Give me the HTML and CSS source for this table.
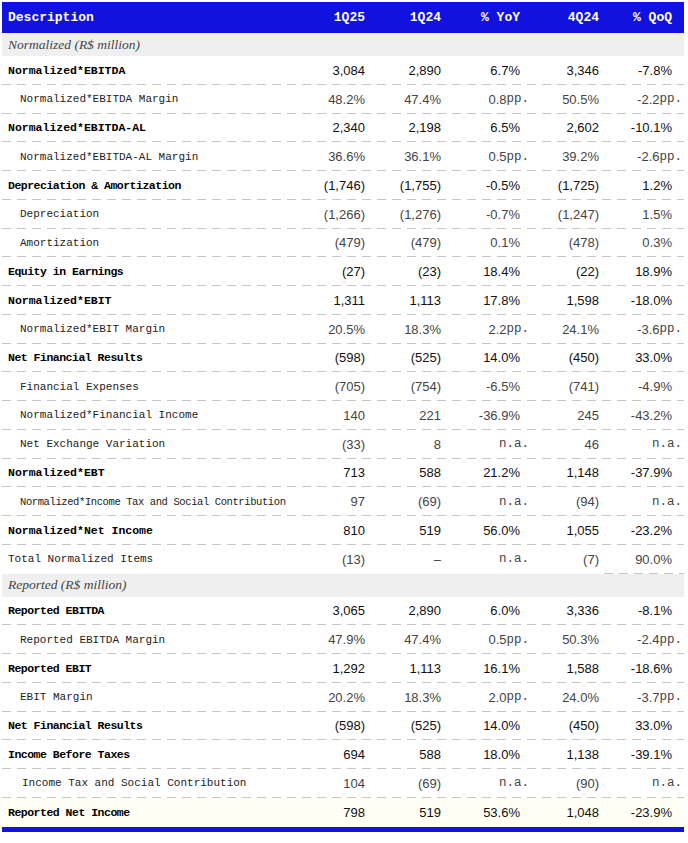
FILE: index.html
```html
<!DOCTYPE html>
<html lang="en">
<head>
<meta charset="utf-8">
<title>Results</title>
<link rel="stylesheet" href="styles.css">
</head>
<body>
<div class="table">
  <div class="row head">
    <div class="lbl">Description</div><div class="c">1Q25</div><div class="c">1Q24</div><div class="c">% YoY</div><div class="c">4Q24</div><div class="c">% QoQ</div>
  </div>
  <div class="row section"><div class="lbl">Normalized (R$ million)</div></div>

  <div class="row b dash"><div class="lbl">Normalized*EBITDA</div><div class="c">3,084</div><div class="c">2,890</div><div class="c">6.7%</div><div class="c">3,346</div><div class="c">-7.8%</div></div>
  <div class="row i dash"><div class="lbl">Normalized*EBITDA Margin</div><div class="c">48.2%</div><div class="c">47.4%</div><div class="c">0.8<span class="pp">pp.</span></div><div class="c">50.5%</div><div class="c">-2.2<span class="pp">pp.</span></div></div>
  <div class="row b dash"><div class="lbl">Normalized*EBITDA-AL</div><div class="c">2,340</div><div class="c">2,198</div><div class="c">6.5%</div><div class="c">2,602</div><div class="c">-10.1%</div></div>
  <div class="row i dash"><div class="lbl">Normalized*EBITDA-AL Margin</div><div class="c">36.6%</div><div class="c">36.1%</div><div class="c">0.5<span class="pp">pp.</span></div><div class="c">39.2%</div><div class="c">-2.6<span class="pp">pp.</span></div></div>
  <div class="row b dash"><div class="lbl tight">Depreciation &amp; Amortization</div><div class="c">(1,746)</div><div class="c">(1,755)</div><div class="c">-0.5%</div><div class="c">(1,725)</div><div class="c">1.2%</div></div>
  <div class="row i dash"><div class="lbl">Depreciation</div><div class="c">(1,266)</div><div class="c">(1,276)</div><div class="c">-0.7%</div><div class="c">(1,247)</div><div class="c">1.5%</div></div>
  <div class="row i dash"><div class="lbl">Amortization</div><div class="c">(479)</div><div class="c">(479)</div><div class="c">0.1%</div><div class="c">(478)</div><div class="c">0.3%</div></div>
  <div class="row b dash"><div class="lbl tight">Equity in Earnings</div><div class="c">(27)</div><div class="c">(23)</div><div class="c">18.4%</div><div class="c">(22)</div><div class="c">18.9%</div></div>
  <div class="row b dash"><div class="lbl">Normalized*EBIT</div><div class="c">1,311</div><div class="c">1,113</div><div class="c">17.8%</div><div class="c">1,598</div><div class="c">-18.0%</div></div>
  <div class="row i dash"><div class="lbl">Normalized*EBIT Margin</div><div class="c">20.5%</div><div class="c">18.3%</div><div class="c">2.2<span class="pp">pp.</span></div><div class="c">24.1%</div><div class="c">-3.6<span class="pp">pp.</span></div></div>
  <div class="row b dash"><div class="lbl tight">Net Financial Results</div><div class="c">(598)</div><div class="c">(525)</div><div class="c">14.0%</div><div class="c">(450)</div><div class="c">33.0%</div></div>
  <div class="row i dash"><div class="lbl">Financial Expenses</div><div class="c">(705)</div><div class="c">(754)</div><div class="c">-6.5%</div><div class="c">(741)</div><div class="c">-4.9%</div></div>
  <div class="row i dash"><div class="lbl">Normalized*Financial Income</div><div class="c">140</div><div class="c">221</div><div class="c">-36.9%</div><div class="c">245</div><div class="c">-43.2%</div></div>
  <div class="row i dash"><div class="lbl">Net Exchange Variation</div><div class="c">(33)</div><div class="c">8</div><div class="c"><span class="na">n.a.</span></div><div class="c">46</div><div class="c"><span class="na">n.a.</span></div></div>
  <div class="row b dash"><div class="lbl">Normalized*EBT</div><div class="c">713</div><div class="c">588</div><div class="c">21.2%</div><div class="c">1,148</div><div class="c">-37.9%</div></div>
  <div class="row i dash"><div class="lbl tight">Normalized*Income Tax and Social Contribution</div><div class="c">97</div><div class="c">(69)</div><div class="c"><span class="na">n.a.</span></div><div class="c">(94)</div><div class="c"><span class="na">n.a.</span></div></div>
  <div class="row b dash"><div class="lbl">Normalized*Net Income</div><div class="c">810</div><div class="c">519</div><div class="c">56.0%</div><div class="c">1,055</div><div class="c">-23.2%</div></div>
  <div class="row r"><div class="lbl">Total Normalized Items</div><div class="c">(13)</div><div class="c">–</div><div class="c"><span class="na">n.a.</span></div><div class="c">(7)</div><div class="c dash">90.0%</div></div>

  <div class="row section"><div class="lbl">Reported (R$ million)</div></div>

  <div class="row b dash"><div class="lbl tight">Reported EBITDA</div><div class="c">3,065</div><div class="c">2,890</div><div class="c">6.0%</div><div class="c">3,336</div><div class="c">-8.1%</div></div>
  <div class="row i dash"><div class="lbl">Reported EBITDA Margin</div><div class="c">47.9%</div><div class="c">47.4%</div><div class="c">0.5<span class="pp">pp.</span></div><div class="c">50.3%</div><div class="c">-2.4<span class="pp">pp.</span></div></div>
  <div class="row b dash"><div class="lbl tight">Reported EBIT</div><div class="c">1,292</div><div class="c">1,113</div><div class="c">16.1%</div><div class="c">1,588</div><div class="c">-18.6%</div></div>
  <div class="row i dash"><div class="lbl">EBIT Margin</div><div class="c">20.2%</div><div class="c">18.3%</div><div class="c">2.0<span class="pp">pp.</span></div><div class="c">24.0%</div><div class="c">-3.7<span class="pp">pp.</span></div></div>
  <div class="row b dash"><div class="lbl tight">Net Financial Results</div><div class="c">(598)</div><div class="c">(525)</div><div class="c">14.0%</div><div class="c">(450)</div><div class="c">33.0%</div></div>
  <div class="row b dash"><div class="lbl tight">Income Before Taxes</div><div class="c">694</div><div class="c">588</div><div class="c">18.0%</div><div class="c">1,138</div><div class="c">-39.1%</div></div>
  <div class="row i i2 dash"><div class="lbl">Income Tax and Social Contribution</div><div class="c">104</div><div class="c">(69)</div><div class="c"><span class="na">n.a.</span></div><div class="c">(90)</div><div class="c"><span class="na">n.a.</span></div></div>
  <div class="row b last"><div class="lbl tight">Reported Net Income</div><div class="c">798</div><div class="c">519</div><div class="c">53.6%</div><div class="c">1,048</div><div class="c">-23.9%</div></div>
  <div class="bar"></div>
</div>
</body>
</html>
```

FILE: styles.css
```css
html, body {
  background: #ffffff;
}
body {
  margin: 2px 0 0 2px;
}
.table {
  width: 682px;
}
.row {
  display: grid;
  grid-template-columns: 296px 72px 76px 88px 70px 80px;
  height: 28.75px;
  align-items: center;
  font-family: "Liberation Sans", Arial, sans-serif;
  font-size: 13px;
  color: #111;
}
.lbl {
  font-family: "Liberation Mono", "Courier New", monospace;
  padding-left: 6px;
  white-space: nowrap;
  overflow: hidden;
}
.c {
  text-align: right;
  white-space: nowrap;
  padding-right: 5px;
  height: 100%;
  display: flex;
  align-items: center;
  justify-content: flex-end;
}
.c:nth-child(4) { padding-right: 14px; }
.c:nth-child(6) { padding-right: 12px; }

.dash {
  background-image: repeating-linear-gradient(90deg, #c6c6c6 0 9px, transparent 9px 15px);
  background-size: 100% 1px;
  background-repeat: no-repeat;
  background-position: 0 100%;
}

.head {
  height: 31px;
  background: #1212e0;
  color: #ffffff;
}
.head .lbl,
.head .c {
  font-family: "Liberation Mono", "Courier New", monospace;
  font-weight: bold;
  font-size: 13px;
}
.head .lbl { padding-left: 6px; }

.section {
  height: 23px;
  background: #efefef;
}
.section .lbl {
  font-family: "Liberation Serif", "Times New Roman", serif;
  font-style: italic;
  font-size: 13.5px;
  color: #444;
}

.b .lbl {
  font-weight: bold;
  font-size: 11.5px;
  color: #000;
}
.b .lbl.tight {
  letter-spacing: -0.5px;
}
.b .c {
  color: #111;
}

.i .lbl,
.r .lbl {
  font-size: 11px;
  color: #222;
}
.i .lbl { padding-left: 18px; }
.i2 .lbl { padding-left: 20px; }
.i .lbl.tight {
  font-size: 10.5px;
  letter-spacing: -0.4px;
}
.i .c,
.r .c {
  color: #444;
}

.pp,
.na {
  font-family: "Liberation Mono", "Courier New", monospace;
  font-size: 12.5px;
}
.c:nth-child(4) .pp,
.c:nth-child(4) .na { margin-right: -9px; }
.c:nth-child(6) .pp,
.c:nth-child(6) .na { margin-right: -10px; }

.last {
  background: #fffff6;
}
.bar {
  height: 5px;
  background: #1212e0;
}
```
